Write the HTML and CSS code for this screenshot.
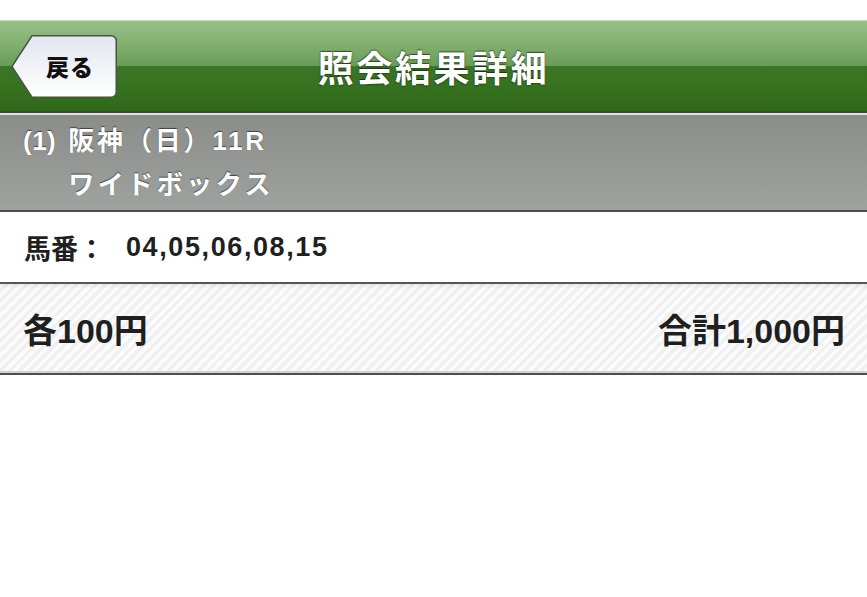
FILE: index.html
```html
<!DOCTYPE html>
<html lang="ja">
<head>
<meta charset="utf-8">
<title>照会結果詳細</title>
<link rel="stylesheet" href="styles.css">
</head>
<body>
<div class="top-gap"></div>
<header class="navbar">
  <div class="nav-left">
    <button class="back-btn" type="button">
      <svg class="back-bg" width="106" height="63" viewBox="0 0 106 63" aria-hidden="true">
        <defs>
          <linearGradient id="bg" x1="0" y1="0" x2="0" y2="1">
            <stop offset="0" stop-color="#e2e6ef"/>
            <stop offset="1" stop-color="#ffffff"/>
          </linearGradient>
        </defs>
        <path d="M21 0.75 H99.5 Q105.25 0.75 105.25 6.5 V56.5 Q105.25 62.25 99.5 62.25 H21 L0.9 31.5 Z" fill="url(#bg)" stroke="#465445" stroke-width="1.5"/>
      </svg>
      <span class="back-label">戻る</span>
    </button>
  </div>
  <h1 class="nav-title">照会結果詳細</h1>
  <div class="nav-right"></div>
</header>
<section class="race-info">
  <span class="race-no">(1)</span>
  <div class="race-lines">
    <div>阪神（日）11R</div>
    <div class="bet-type">ワイドボックス</div>
  </div>
</section>
<div class="row numbers">
  <span class="label">馬番：</span>
  <span class="nums">04,05,06,08,15</span>
</div>
<div class="row amount">
  <span>各100円</span>
  <span>合計1,000円</span>
</div>
</body>
</html>
```
FILE: styles.css
```css
html, body {
  margin: 0;
  padding: 0;
  background: #ffffff;
}
body {
  width: 867px;
  font-family: "Liberation Sans", "Noto Sans CJK JP", sans-serif;
  font-weight: bold;
}
.top-gap {
  height: 20px;
}
.navbar {
  height: 90px;
  border-top: 1px solid #c6dbbb;
  border-bottom: 2px solid #3b4a37;
  background: linear-gradient(to bottom, #98c088 0%, #82b070 25%, #6a9b58 50%, #3b7626 50.5%, #35701f 80%, #2f681b 100%);
  display: grid;
  grid-template-columns: 1fr auto 1fr;
  align-items: center;
}
.nav-left {
  padding-left: 11px;
  display: flex;
  align-items: center;
}
.back-btn {
  position: relative;
  width: 106px;
  height: 63px;
  padding: 0 0 0 12px;
  margin: 0;
  border: none;
  background: transparent;
  display: flex;
  align-items: center;
  justify-content: center;
  cursor: pointer;
}
.back-bg {
  position: absolute;
  left: 0;
  top: 0;
}
.back-label {
  position: relative;
  font-family: "Noto Sans CJK JP", sans-serif;
  font-weight: 900;
  font-size: 23px;
  letter-spacing: 1px;
  color: #111;
  line-height: 1;
}
.nav-title {
  margin: 0;
  font-family: "Noto Sans CJK JP", sans-serif;
  font-weight: bold;
  font-size: 36px;
  letter-spacing: 2.6px;
  color: #ffffff;
  line-height: 1;
  text-shadow: 0 -1px 1px rgba(0, 0, 0, 0.55), 0 1px 2px rgba(0, 0, 0, 0.35);
}
.race-info {
  height: 95px;
  border-top: 2px solid #e2e3e1;
  border-bottom: 2px solid #4b4d4a;
  background: linear-gradient(to bottom, #8c8d8a 0%, #949793 50%, #9fa39f 100%);
  display: flex;
  align-items: center;
  padding-left: 23px;
  gap: 12px;
  color: #ffffff;
  font-size: 26px;
  letter-spacing: 2.8px;
  line-height: 44px;
  text-shadow: 0 -1px 1px rgba(0, 0, 0, 0.55);
}
.race-no {
  letter-spacing: 0.5px;
  margin-bottom: 44px;
}
.bet-type {
  letter-spacing: 3.5px;
}
.row {
  display: flex;
  align-items: center;
  color: #1f1f1f;
}
.numbers {
  height: 70px;
  border-bottom: 2px solid #565656;
  padding-left: 24px;
  font-size: 27px;
  background: #ffffff;
}
.numbers .label {
  width: 102px;
}
.numbers .nums {
  letter-spacing: 1.6px;
}
.amount {
  height: 89px;
  justify-content: space-between;
  padding: 0 22px 0 23px;
  font-size: 34px;
  border-bottom: 2px solid #4f4f4f;
  background:
    linear-gradient(to bottom, rgba(0, 0, 0, 0.06), rgba(0, 0, 0, 0) 5px),
    repeating-linear-gradient(135deg, #fbfbfb 0px, #fbfbfb 3.5px, #f0f0f0 3.5px, #f0f0f0 7px);
  box-shadow: inset 0 -2px 0 #d2d2d2;
}
```
